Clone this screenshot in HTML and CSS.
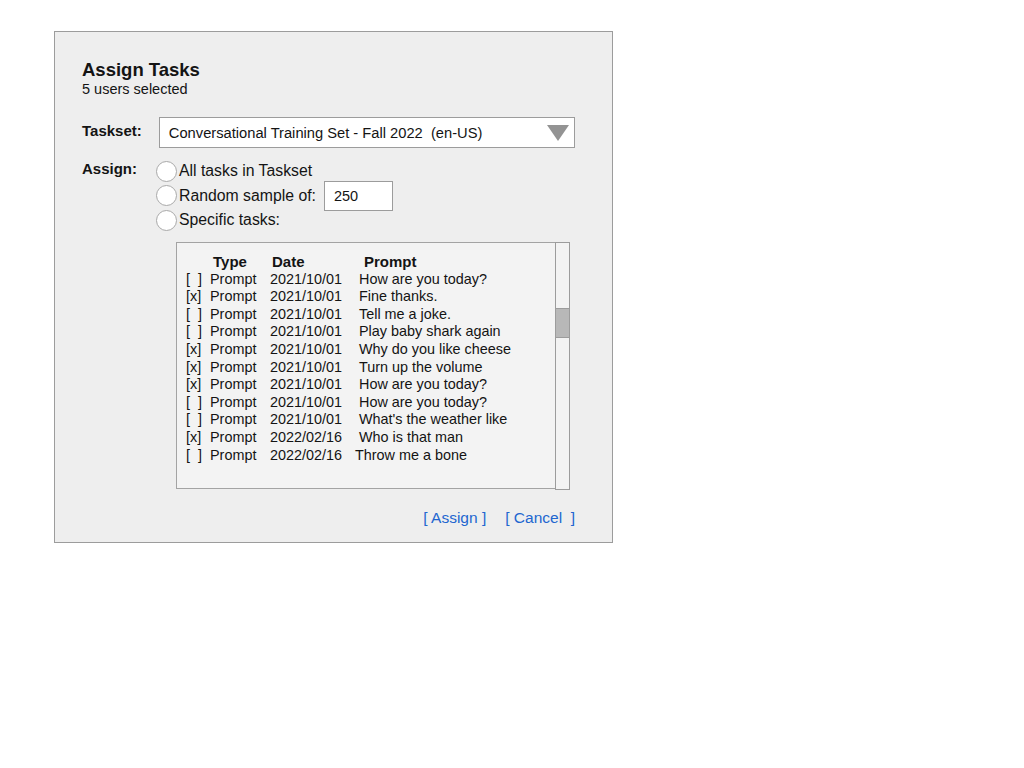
FILE: index.html
```html
<!DOCTYPE html>
<html>
<head>
<meta charset="utf-8">
<title>Assign Tasks</title>
<link rel="stylesheet" href="styles.css">
</head>
<body>
<div class="dialog">
  <h1 class="title">Assign Tasks</h1>
  <div class="subtitle">5 users selected</div>

  <div class="field taskset">
    <div class="field-label taskset-label">Taskset:</div>
    <div class="select">
      <span class="select-text">Conversational Training Set - Fall 2022  (en-US)</span>
      <span class="caret"></span>
    </div>
  </div>

  <div class="field assign">
    <div class="field-label assign-label">Assign:</div>
    <div class="options">
      <div class="opt"><span class="radio"></span><span class="opt-text">All tasks in Taskset</span></div>
      <div class="opt"><span class="radio"></span><span class="opt-text">Random sample of:</span><span class="num-input">250</span></div>
      <div class="opt"><span class="radio"></span><span class="opt-text">Specific tasks:</span></div>
    </div>
  </div>

  <div class="list-wrap">
    <div class="list">
      <div class="row head"><span></span><span class="h-type">Type</span><span class="h-date">Date</span><span class="h-prompt">Prompt</span></div>
      <div class="row"><span>[  ]</span><span>Prompt</span><span>2021/10/01</span><span>How are you today?</span></div>
      <div class="row"><span>[x]</span><span>Prompt</span><span>2021/10/01</span><span>Fine thanks.</span></div>
      <div class="row"><span>[  ]</span><span>Prompt</span><span>2021/10/01</span><span>Tell me a joke.</span></div>
      <div class="row"><span>[  ]</span><span>Prompt</span><span>2021/10/01</span><span>Play baby shark again</span></div>
      <div class="row"><span>[x]</span><span>Prompt</span><span>2021/10/01</span><span>Why do you like cheese</span></div>
      <div class="row"><span>[x]</span><span>Prompt</span><span>2021/10/01</span><span>Turn up the volume</span></div>
      <div class="row"><span>[x]</span><span>Prompt</span><span>2021/10/01</span><span>How are you today?</span></div>
      <div class="row"><span>[  ]</span><span>Prompt</span><span>2021/10/01</span><span>How are you today?</span></div>
      <div class="row"><span>[  ]</span><span>Prompt</span><span>2021/10/01</span><span>What's the weather like</span></div>
      <div class="row"><span>[x]</span><span>Prompt</span><span>2022/02/16</span><span>Who is that man</span></div>
      <div class="row"><span>[  ]</span><span>Prompt</span><span>2022/02/16</span><span class="tight">Throw me a bone</span></div>
    </div>
    <div class="scrollbar"><div class="thumb"></div></div>
  </div>

  <div class="actions">
    <a class="link" href="#">[ Assign ]</a>
    <a class="link" href="#">[ Cancel  ]</a>
  </div>
</div>
</body>
</html>
```
FILE: styles.css
```css
html, body {
  margin: 0;
  padding: 0;
  background: #ffffff;
}

body {
  font-family: "Liberation Sans", Arial, sans-serif;
  color: #141414;
}

.dialog {
  box-sizing: border-box;
  width: 559px;
  height: 512px;
  margin: 31px 0 0 54px;
  padding: 28px 37px 0 27px;
  border: 1px solid #9c9c9c;
  background: #eeeeee;
}

.title {
  margin: 0;
  font-size: 18.5px;
  line-height: 20px;
  font-weight: bold;
}

.subtitle {
  font-size: 14.5px;
  line-height: 18px;
}

.field {
  display: flex;
}

.field-label {
  font-size: 15px;
  font-weight: bold;
  line-height: 18px;
}

.taskset {
  margin-top: 19px;
  align-items: center;
}

.taskset-label {
  width: 77px;
  padding-bottom: 4px;
}

.select {
  box-sizing: border-box;
  width: 417px;
  height: 31px;
  display: flex;
  align-items: center;
  justify-content: space-between;
  padding: 0 5px 0 9px;
  border: 1px solid #9c9c9c;
  background: #ffffff;
}

.select-text {
  font-size: 14.7px;
  white-space: pre;
}

.caret {
  width: 0;
  height: 0;
  border-left: 11.5px solid transparent;
  border-right: 11.5px solid transparent;
  border-top: 16px solid #939393;
}

.assign {
  margin-top: 10px;
  align-items: flex-start;
}

.assign-label {
  width: 74px;
  margin-top: 2px;
}

.options {
  display: flex;
  flex-direction: column;
  padding-top: 1px;
}

.opt {
  height: 24.5px;
  display: flex;
  align-items: center;
}

.radio {
  box-sizing: border-box;
  width: 21px;
  height: 21px;
  border: 1px solid #a9a9a9;
  border-radius: 50%;
  background: #ffffff;
  margin-right: 2px;
}

.opt-text {
  font-size: 15.8px;
}

.num-input {
  box-sizing: border-box;
  width: 69px;
  height: 30px;
  margin-left: 8px;
  padding-left: 9px;
  display: flex;
  align-items: center;
  border: 1px solid #9c9c9c;
  background: #ffffff;
  font-size: 14.5px;
}

.list-wrap {
  display: flex;
  margin: 9.5px 0 0 94px;
}

.list {
  box-sizing: border-box;
  width: 380px;
  height: 247px;
  padding: 10px 0 0 9px;
  border: 1px solid #a3a3a3;
  background: #f3f3f3;
}

.row {
  display: grid;
  grid-template-columns: 24px 60px 89px auto;
  font-size: 14.4px;
  line-height: 17.6px;
  white-space: pre;
}

.row.head {
  font-size: 15px;
  font-weight: bold;
}

.h-type {
  padding-left: 3px;
}

.h-date {
  padding-left: 2px;
}

.h-prompt {
  padding-left: 5px;
}

.tight {
  margin-left: -4px;
}

.scrollbar {
  box-sizing: border-box;
  width: 15px;
  height: 248px;
  margin-left: -1px;
  border: 1px solid #9c9c9c;
  background: #f3f3f3;
}

.thumb {
  box-sizing: border-box;
  height: 30px;
  margin-top: 65px;
  border-top: 1px solid #9c9c9c;
  border-bottom: 1px solid #9c9c9c;
  background: #b8b8b8;
}

.actions {
  display: flex;
  justify-content: flex-end;
  gap: 19px;
  margin-top: 19px;
}

.link {
  font-size: 15.5px;
  line-height: 18px;
  color: #2266d0;
  text-decoration: none;
  white-space: pre;
}
```
